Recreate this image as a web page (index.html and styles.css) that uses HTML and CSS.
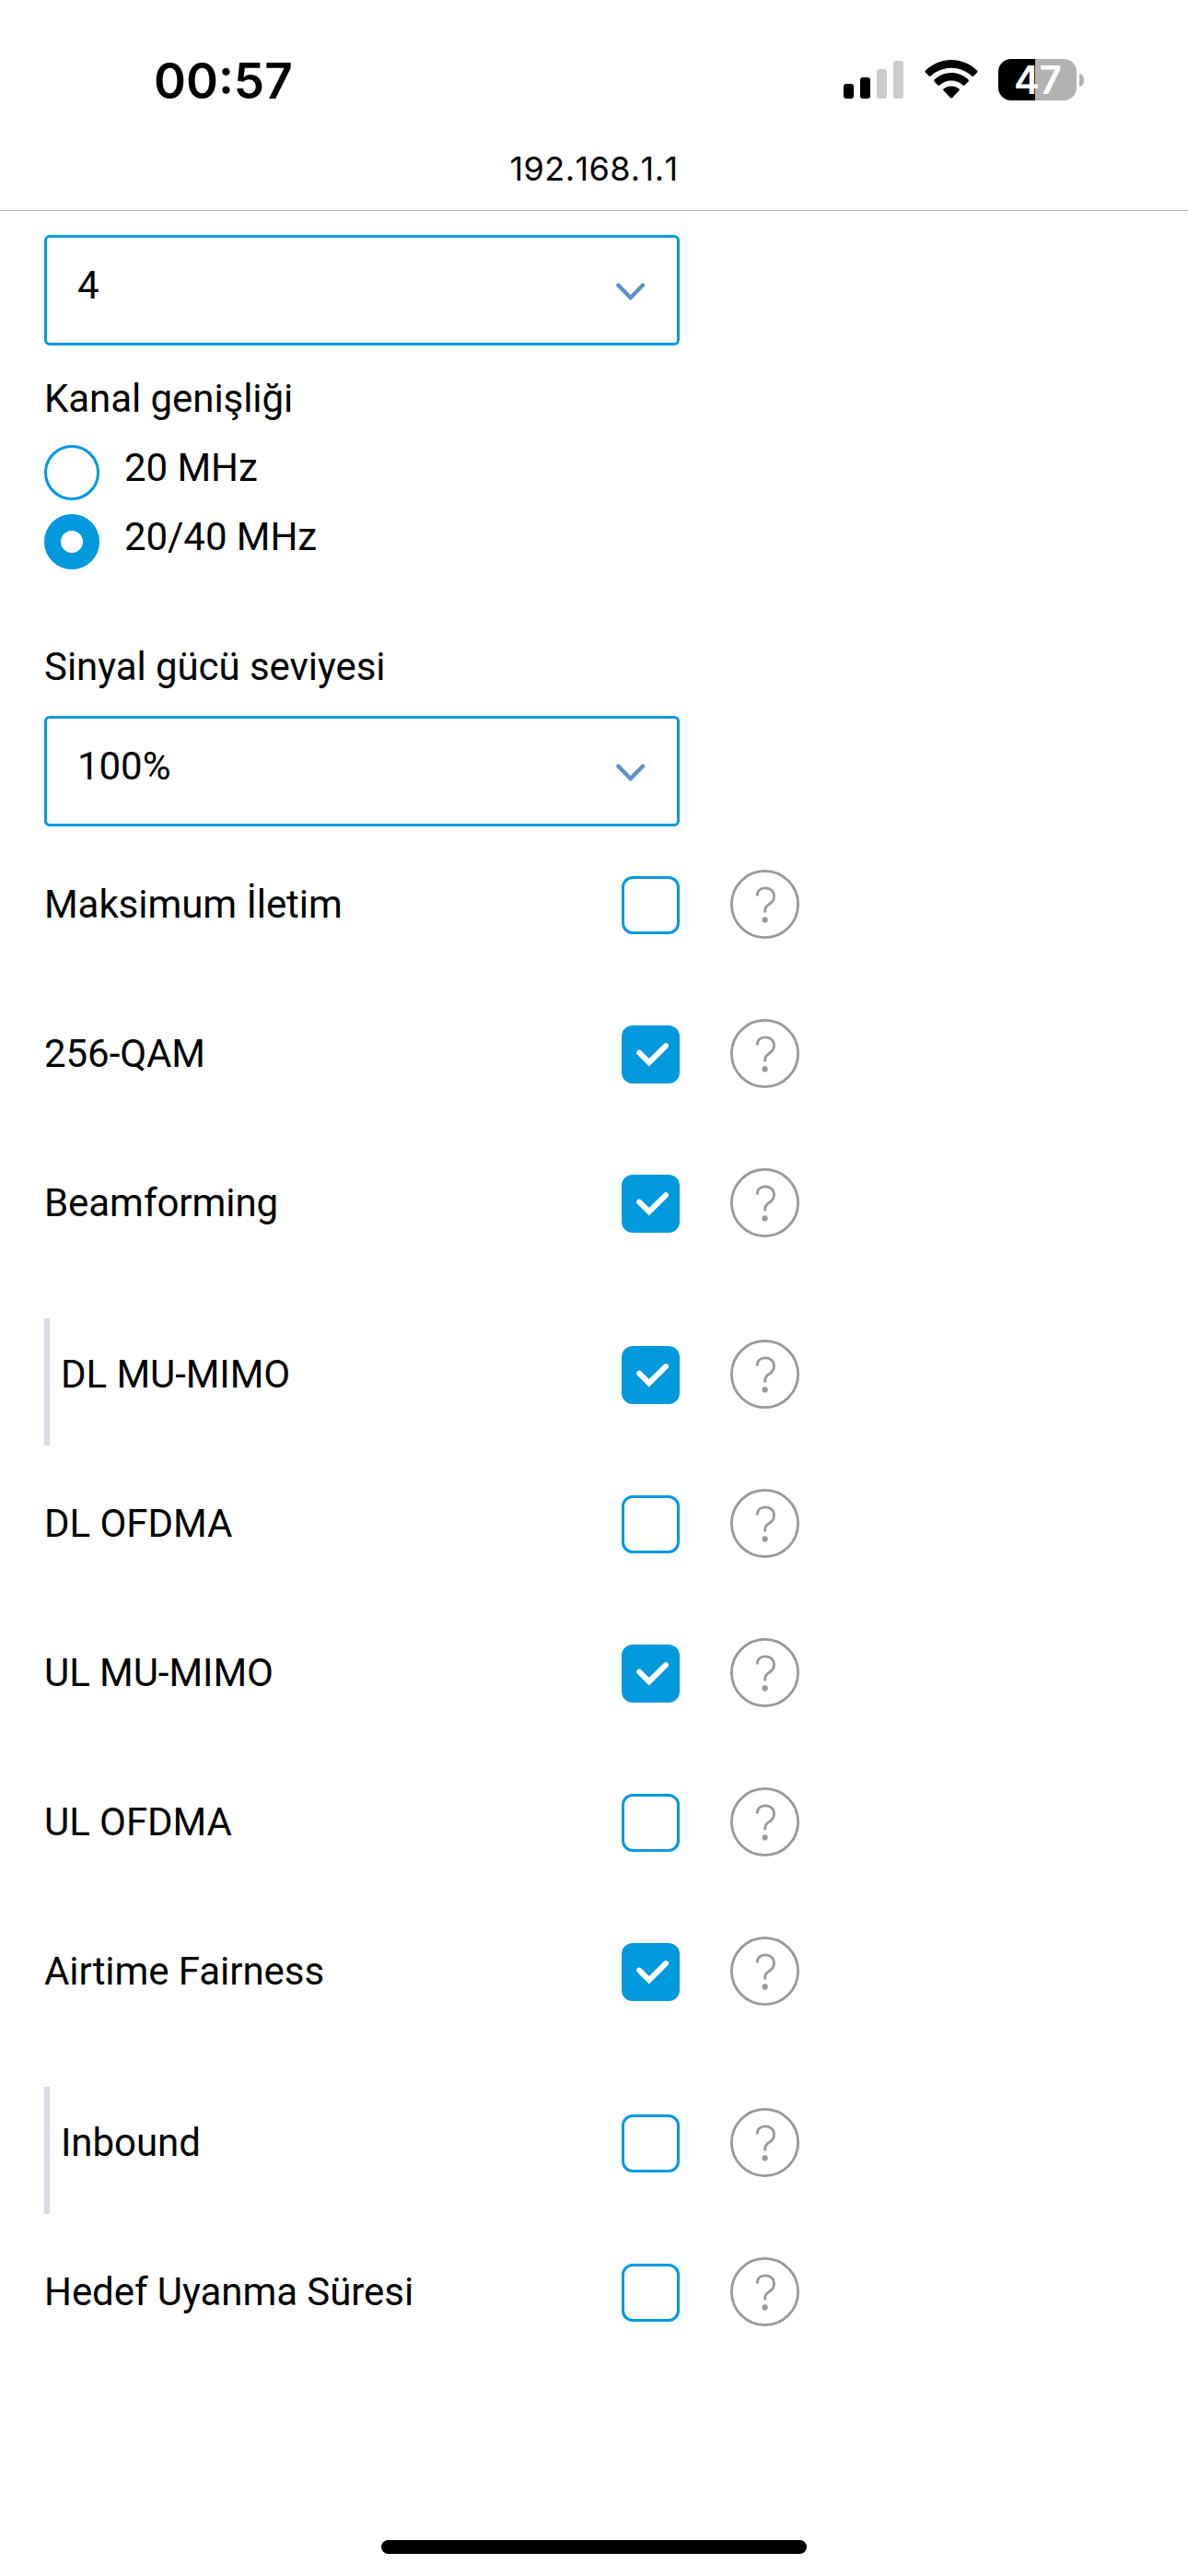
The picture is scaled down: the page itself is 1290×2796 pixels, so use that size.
FILE: index.html
```html
<!DOCTYPE html>
<html lang="tr">
<head>
<meta charset="utf-8">
<title>192.168.1.1</title>
<link rel="stylesheet" href="styles.css">
</head>
<body>
<svg class="defs" aria-hidden="true">
  <symbol id="chevron" viewBox="0 0 36 24"><path d="M4.3 4.5 17.7 18.2 31 4.5" fill="none" stroke="#5a92ca" stroke-width="4.4" stroke-linecap="round"/></symbol>
  <symbol id="check" viewBox="0 0 63 63"><path d="M19.2 29.7 29.8 40.2 48 22.2" fill="none" stroke="#fff" stroke-width="6" stroke-linecap="round"/></symbol>
  <symbol id="help" viewBox="0 0 75 75">
    <g fill="none" stroke="#999" stroke-width="2.8">
      <circle cx="37.5" cy="37.5" r="36.1"/>
      <path d="M29.2 28.4C29.2 22.8 32.8 19.8 38 19.8 43.6 19.8 47.5 23.6 47.5 28.8 47.5 33.2 45.6 35.4 42.4 37.2 39 39.2 37.7 41 37.7 44.2V46.4"/>
    </g>
    <circle cx="37.6" cy="54.4" r="3.1" fill="#999"/>
  </symbol>
</svg>

<header class="top">
  <div class="status">
    <span class="time">00:57</span>
    <div class="indicators">
      <svg class="signal" viewBox="0 0 65 41">
        <rect x="0" y="25" width="11" height="16" rx="3"/>
        <rect x="18" y="18" width="11" height="23" rx="3"/>
        <rect x="36" y="9" width="11" height="32" rx="3" fill="#ccc"/>
        <rect x="54" y="0" width="11" height="41" rx="3" fill="#ccc"/>
      </svg>
      <svg class="wifi" viewBox="0 0 58 42">
        <path d="M.8 11.7C16.6-3.9 41.4-3.9 57.2 11.7Q58 12.6 57.2 13.5L53.300 17.500Q52.300 18.400 51.300 17.500C38.800 5.700 19.200 5.700 6.700 17.500Q5.700 18.400 4.700 17.500L.8 13.500Q0 12.600 .8 11.700Z"/>
        <path d="M10.500 21.600C20.700 11.500 37.300 11.500 47.500 21.600Q48.400 22.500 47.500 23.500L43.500 27.400Q42.600 28.300 41.600 27.400C34.500 20.800 23.500 20.800 16.400 27.400Q15.400 28.300 14.500 27.400L10.500 23.500Q9.600 22.500 10.500 21.600Z"/>
        <path d="M20.500 31.500C25.300 27.400 32.700 27.400 37.500 31.500Q38.400 32.400 37.500 33.300L29.900 41.200Q29 42 28.100 41.200L20.500 33.300Q19.600 32.400 20.500 31.500Z"/>
      </svg>
      <div class="battery"><span class="cell">47</span><span class="nub"></span></div>
    </div>
  </div>
  <div class="address">192.168.1.1</div>
</header>

<main class="settings">
  <div class="select"><span>4</span><svg class="chevron"><use href="#chevron"/></svg></div>

  <div class="label width-label">Kanal genişliği</div>
  <div class="radios">
    <div class="radio"><i class="dot"></i><span>20 MHz</span></div>
    <div class="radio"><i class="dot on"></i><span>20/40 MHz</span></div>
  </div>

  <div class="label power-label">Sinyal gücü seviyesi</div>
  <div class="select"><span>100%</span><svg class="chevron"><use href="#chevron"/></svg></div>

  <div class="options">
    <div class="option"><span class="name">Maksimum İletim</span><i class="box"></i><svg class="help"><use href="#help"/></svg></div>
    <div class="option"><span class="name">256-QAM</span><i class="box on"><svg><use href="#check"/></svg></i><svg class="help"><use href="#help"/></svg></div>
    <div class="option"><span class="name">Beamforming</span><i class="box on"><svg><use href="#check"/></svg></i><svg class="help"><use href="#help"/></svg></div>
    <div class="option sub"><span class="name">DL MU-MIMO</span><i class="box on"><svg><use href="#check"/></svg></i><svg class="help"><use href="#help"/></svg></div>
    <div class="option"><span class="name">DL OFDMA</span><i class="box"></i><svg class="help"><use href="#help"/></svg></div>
    <div class="option"><span class="name">UL MU-MIMO</span><i class="box on"><svg><use href="#check"/></svg></i><svg class="help"><use href="#help"/></svg></div>
    <div class="option"><span class="name">UL OFDMA</span><i class="box"></i><svg class="help"><use href="#help"/></svg></div>
    <div class="option"><span class="name">Airtime Fairness</span><i class="box on"><svg><use href="#check"/></svg></i><svg class="help"><use href="#help"/></svg></div>
    <div class="option sub"><span class="name">Inbound</span><i class="box"></i><svg class="help"><use href="#help"/></svg></div>
    <div class="option"><span class="name">Hedef Uyanma Süresi</span><i class="box"></i><svg class="help"><use href="#help"/></svg></div>
  </div>
</main>

<footer class="home"><div class="home-bar"></div></footer>
</body>
</html>
```

FILE: styles.css
```css
* { box-sizing: border-box; }

body {
  margin: 0;
  height: 2796px;
  display: flex;
  flex-direction: column;
  background: #fff;
  color: #000;
  font: 42px/49px Roboto, sans-serif;
  letter-spacing: -0.06px;
  overflow: hidden;
}

svg { display: block; }
.defs { position: absolute; width: 0; height: 0; }

/* Status bar and address */
.top {
  height: 229px;
  flex: none;
  border-bottom: 1px solid #b2b2b2;
  font-family: Inter, sans-serif;
}

.status {
  height: 155px;
  padding: 57px 113px 0 167px;
  display: flex;
  justify-content: space-between;
  align-items: flex-start;
}

.time {
  font-size: 53px;
  font-weight: 600;
  line-height: 62px;
  letter-spacing: 0;
}

.indicators { display: flex; align-items: flex-start; padding-top: 7px; }
.signal { width: 65px; height: 41px; margin-top: 2px; }
.wifi { width: 58px; height: 42px; margin: 1px 22px 0 23px; }
.battery { display: flex; align-items: center; gap: 3px; }

.cell {
  width: 85px;
  height: 45px;
  border-radius: 14px;
  background: linear-gradient(90deg, #000 40px, #b2b2b2 40px);
  color: #fff;
  font-size: 42px;
  font-weight: 600;
  line-height: 45px;
  letter-spacing: -0.5px;
  text-align: center;
}

.nub { width: 5px; height: 14px; border-radius: 0 5px 5px 0 / 0 7px 7px 0; background: #b2b2b2; }

.address {
  font-size: 36px;
  line-height: 56px;
  letter-spacing: 0.4px;
  font-kerning: none;
  text-align: center;
}

/* Form */
.settings { flex: 1; width: 869px; padding: 26px 0 0 48px; }

.select {
  width: 690px;
  height: 120px;
  padding: 27px 32px 0 33px;
  border: 3px solid #0099de;
  border-radius: 6px;
  display: flex;
  justify-content: space-between;
}

.chevron { width: 36px; height: 24px; margin-top: 20px; }

.width-label { margin: 33px 0 26px; }
.power-label { margin: 81px 0 29px; }

.radios { display: grid; gap: 15px; }
.radio { display: flex; gap: 27px; height: 60px; }

.dot {
  width: 60px;
  height: 60px;
  border: 3px solid #0099de;
  border-radius: 50%;
}
.dot.on { border-width: 18px; }

.options { display: grid; gap: 24px; margin-top: 24px; }

.option {
  height: 138px;
  display: grid;
  grid-template-columns: 627px 63px 130px;
  align-items: start;
}
.option .name { padding-top: 36px; }

.option.sub {
  margin-top: 24px;
  border-left: 6px solid #d6dbe5;
  padding-left: 12px;
  grid-template-columns: 609px 63px 130px;
}

.box {
  width: 63px;
  height: 63px;
  margin-top: 30px;
  border: 3px solid #0099de;
  border-radius: 12px;
}
.box.on { border: 0; background: #0099de; }
.box svg { width: 63px; height: 63px; }

.help { width: 75px; height: 75px; margin: 23px 0 0 55px; }

.home { height: 39px; display: flex; justify-content: center; }
.home-bar { width: 462px; height: 15px; border-radius: 8px; background: #000; }
```
